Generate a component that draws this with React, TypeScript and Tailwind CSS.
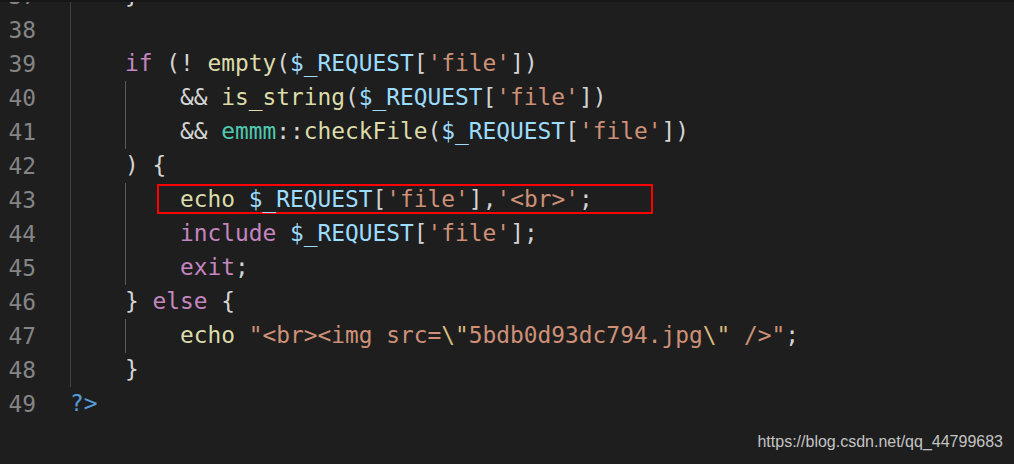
type Tok = [string, string];

const P = "text-[#d4d4d4]";
const KW = "text-[#c586c0]";
const FN = "text-[#dcdcaa]";
const VAR = "text-[#9cdcfe]";
const STR = "text-[#ce9178]";
const CLS = "text-[#4ec9b0]";
const ESC = "text-[#d7ba7d]";
const TAG = "text-[#569cd6]";

type Line = {
  num: number;
  guides: number[]; // indent levels drawn (0 = outer, 1 = inner)
  indent: number; // number of 4-space units
  toks: Tok[];
  box?: boolean;
};

const req: Tok[] = [
  [VAR, "$_REQUEST"],
  [P, "["],
  [STR, "'file'"],
  [P, "]"],
];

const lines: Line[] = [
  { num: 37, guides: [0], indent: 1, toks: [[P, "}"]] },
  { num: 38, guides: [0], indent: 0, toks: [] },
  {
    num: 39,
    guides: [0],
    indent: 1,
    toks: [[KW, "if"], [P, " (! "], [FN, "empty"], [P, "("], ...req, [P, ")"]],
  },
  {
    num: 40,
    guides: [0, 1],
    indent: 2,
    toks: [[P, "&& "], [FN, "is_string"], [P, "("], ...req, [P, ")"]],
  },
  {
    num: 41,
    guides: [0, 1],
    indent: 2,
    toks: [[P, "&& "], [CLS, "emmm"], [P, "::"], [FN, "checkFile"], [P, "("], ...req, [P, ")"]],
  },
  { num: 42, guides: [0], indent: 1, toks: [[P, ") {"]] },
  {
    num: 43,
    guides: [0, 1],
    indent: 2,
    box: true,
    toks: [[FN, "echo"], [P, " "], ...req, [P, ","], [STR, "'<br>'"], [P, ";"]],
  },
  {
    num: 44,
    guides: [0, 1],
    indent: 2,
    toks: [[KW, "include"], [P, " "], ...req, [P, ";"]],
  },
  { num: 45, guides: [0, 1], indent: 2, toks: [[KW, "exit"], [P, ";"]] },
  { num: 46, guides: [0], indent: 1, toks: [[P, "} "], [KW, "else"], [P, " {"]] },
  {
    num: 47,
    guides: [0, 1],
    indent: 2,
    toks: [
      [FN, "echo"],
      [P, " "],
      [STR, '"<br><img src='],
      [ESC, '\\"'],
      [STR, "5bdb0d93dc794.jpg"],
      [ESC, '\\"'],
      [STR, ' />"'],
      [P, ";"],
    ],
  },
  { num: 48, guides: [0], indent: 1, toks: [[P, "}"]] },
  { num: 49, guides: [], indent: 0, toks: [[TAG, "?>"]] },
];

function CodeLine({ line }: { line: Line }) {
  const units = Math.max(line.indent, line.guides.length);
  return (
    <div className="relative flex h-[34px] items-center whitespace-pre">
      <div className="w-[36px] text-right text-[#858585]">{line.num}</div>
      <div className="relative z-10 ml-[34px] flex h-full items-center">
        {Array.from({ length: units }).map((_, i) => (
          <span
            key={i}
            className={
              line.guides.includes(i)
                ? i === 0
                  ? "inline-block h-full w-[4ch] border-l border-[#404040]"
                  : "inline-block h-full w-[4ch] border-l border-[#5a5a5a]"
                : "inline-block h-full w-[4ch]"
            }
          />
        ))}
        <span className="-translate-y-px">
          {line.toks.map(([c, t], i) => (
            <span key={i} className={c}>
              {t}
            </span>
          ))}
        </span>
      </div>
      {line.box && (
        <div className="absolute left-[157px] top-[1px] h-[30px] w-[496px] border-2 border-[#ff0000]" />
      )}
    </div>
  );
}

export default function App() {
  return (
    <div className="relative h-[464px] w-[1014px] overflow-hidden border-t-2 border-[#161616] bg-[#1e1e1e]">
      <div className="-mt-[23px] font-['DejaVu_Sans_Mono',monospace] text-[22.85px] leading-[34px]">
        {lines.map((l) => (
          <CodeLine key={l.num} line={l} />
        ))}
      </div>
      <div className="absolute bottom-[10px] right-[11px] font-['Liberation_Sans',Arial,sans-serif] text-[16px] text-[#c4c4c4]">
        https://blog.csdn.net/qq_44799683
      </div>
    </div>
  );
}
